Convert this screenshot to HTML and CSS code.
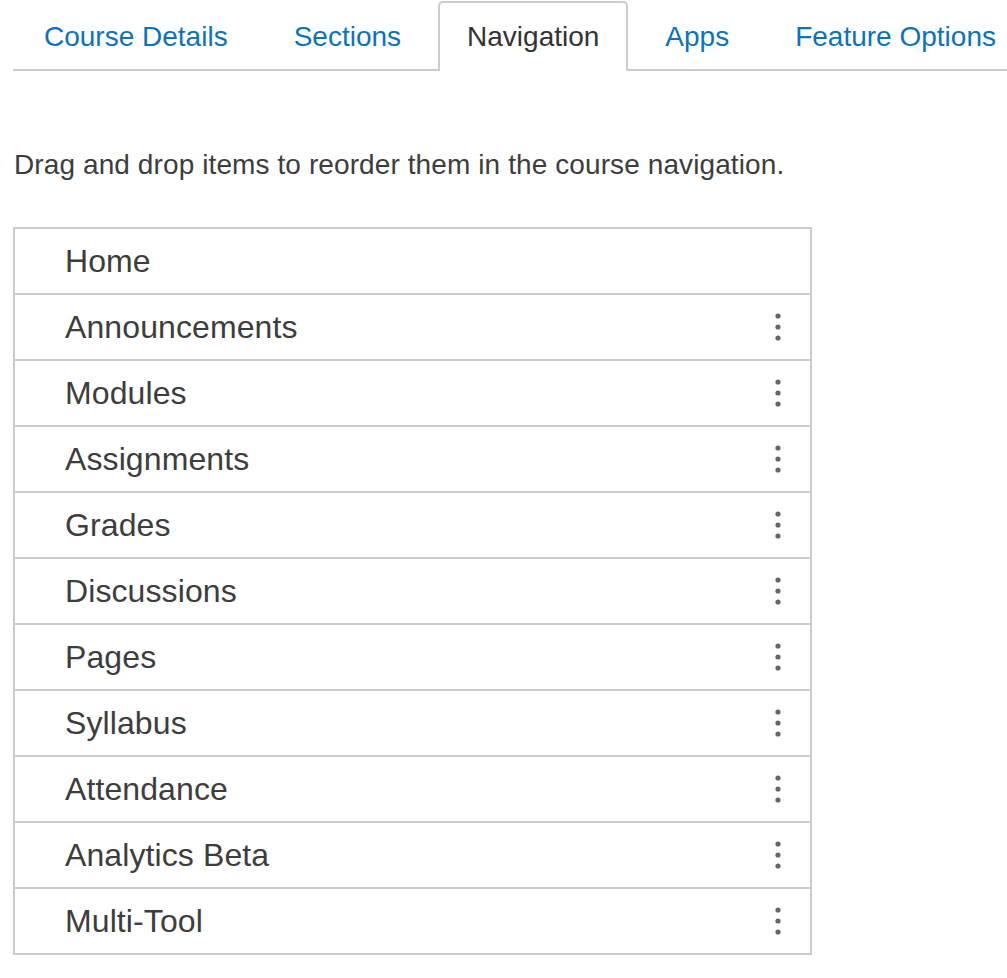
FILE: index.html
```html
<!DOCTYPE html>
<html>
<head>
<meta charset="utf-8">
<link rel="stylesheet" href="styles.css">
</head>
<body>
<div class="page">
  <ul class="tabs">
    <li class="tab"><a href="#">Course Details</a></li>
    <li class="tab"><a href="#">Sections</a></li>
    <li class="tab active"><a href="#">Navigation</a></li>
    <li class="tab"><a href="#">Apps</a></li>
    <li class="tab"><a href="#">Feature Options</a></li>
  </ul>
  <p class="intro">Drag and drop items to reorder them in the course navigation.</p>
  <ul class="nav-list">
    <li class="nav-item"><span>Home</span></li>
    <li class="nav-item"><span>Announcements</span><svg class="kebab" viewBox="0 0 6 28" width="6" height="28"><circle cx="3" cy="3" r="2.6"/><circle cx="3" cy="14" r="2.6"/><circle cx="3" cy="25" r="2.6"/></svg></li>
    <li class="nav-item"><span>Modules</span><svg class="kebab" viewBox="0 0 6 28" width="6" height="28"><circle cx="3" cy="3" r="2.6"/><circle cx="3" cy="14" r="2.6"/><circle cx="3" cy="25" r="2.6"/></svg></li>
    <li class="nav-item"><span>Assignments</span><svg class="kebab" viewBox="0 0 6 28" width="6" height="28"><circle cx="3" cy="3" r="2.6"/><circle cx="3" cy="14" r="2.6"/><circle cx="3" cy="25" r="2.6"/></svg></li>
    <li class="nav-item"><span>Grades</span><svg class="kebab" viewBox="0 0 6 28" width="6" height="28"><circle cx="3" cy="3" r="2.6"/><circle cx="3" cy="14" r="2.6"/><circle cx="3" cy="25" r="2.6"/></svg></li>
    <li class="nav-item"><span>Discussions</span><svg class="kebab" viewBox="0 0 6 28" width="6" height="28"><circle cx="3" cy="3" r="2.6"/><circle cx="3" cy="14" r="2.6"/><circle cx="3" cy="25" r="2.6"/></svg></li>
    <li class="nav-item"><span>Pages</span><svg class="kebab" viewBox="0 0 6 28" width="6" height="28"><circle cx="3" cy="3" r="2.6"/><circle cx="3" cy="14" r="2.6"/><circle cx="3" cy="25" r="2.6"/></svg></li>
    <li class="nav-item"><span>Syllabus</span><svg class="kebab" viewBox="0 0 6 28" width="6" height="28"><circle cx="3" cy="3" r="2.6"/><circle cx="3" cy="14" r="2.6"/><circle cx="3" cy="25" r="2.6"/></svg></li>
    <li class="nav-item"><span>Attendance</span><svg class="kebab" viewBox="0 0 6 28" width="6" height="28"><circle cx="3" cy="3" r="2.6"/><circle cx="3" cy="14" r="2.6"/><circle cx="3" cy="25" r="2.6"/></svg></li>
    <li class="nav-item"><span>Analytics Beta</span><svg class="kebab" viewBox="0 0 6 28" width="6" height="28"><circle cx="3" cy="3" r="2.6"/><circle cx="3" cy="14" r="2.6"/><circle cx="3" cy="25" r="2.6"/></svg></li>
    <li class="nav-item"><span>Multi-Tool</span><svg class="kebab" viewBox="0 0 6 28" width="6" height="28"><circle cx="3" cy="3" r="2.6"/><circle cx="3" cy="14" r="2.6"/><circle cx="3" cy="25" r="2.6"/></svg></li>
  </ul>
</div>
</body>
</html>
```

FILE: styles.css
```css
* { box-sizing: border-box; }
html, body { margin: 0; padding: 0; background: #fff; }
body {
  font-family: "Liberation Sans", Arial, Helvetica, sans-serif;
  color: #3a3a3a;
}
.page {
  padding: 1px 0 0 13px;
}
.tabs {
  list-style: none;
  margin: 0;
  padding: 0 0 0 2px;
  display: flex;
  border-bottom: 2px solid #c7cdd1;
}
.tab {
  margin-right: 8px;
  border: 2px solid transparent;
  border-bottom: none;
  border-radius: 5px 5px 0 0;
}
.tab a {
  display: block;
  padding: 1px 27px 0;
  line-height: 65px;
  font-size: 28px;
  color: #0d72b9;
  text-decoration: none;
  white-space: nowrap;
}
.tab.active {
  border-color: #c7cdd1;
  background: #fff;
  margin-bottom: -2px;
  padding-bottom: 2px;
}
.tab.active a {
  color: #333;
}
.intro {
  margin: 74px 0 0 1px;
  font-size: 28px;
  line-height: 40px;
  letter-spacing: 0.1px;
  color: #3d3d3d;
}
.nav-list {
  list-style: none;
  margin: 42px 0 0 0;
  padding: 0;
  width: 799px;
  border: 2px solid #c7cdd1;
}
.nav-item {
  display: flex;
  align-items: center;
  justify-content: space-between;
  height: 64px;
  padding: 0 29px 0 50px;
  font-size: 32px;
  line-height: 64px;
  letter-spacing: 0.1px;
  color: #3d3d3d;
}
.nav-item + .nav-item {
  border-top: 2px solid #c7cdd1;
  height: 66px;
}
.kebab {
  fill: #666;
  display: block;
}
```
